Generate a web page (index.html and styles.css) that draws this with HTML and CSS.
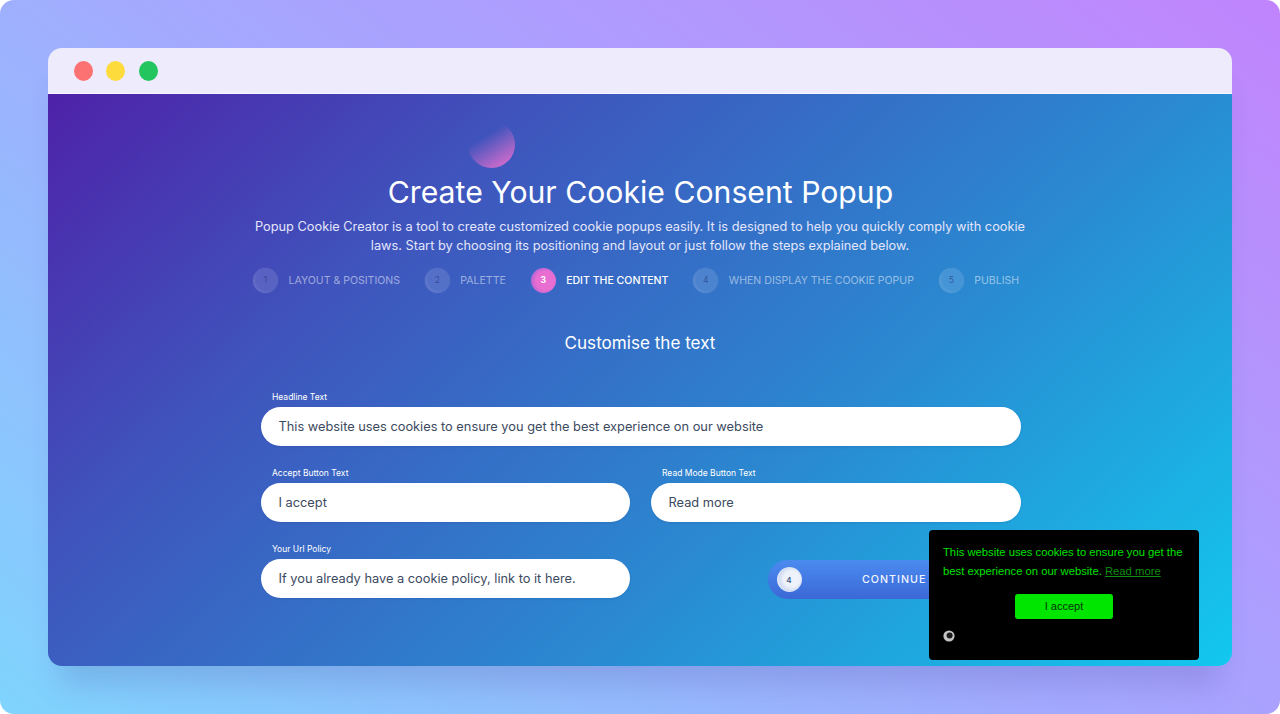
FILE: index.html
```html
<!DOCTYPE html>
<html lang="en">
<head>
<meta charset="utf-8">
<title>Create Your Cookie Consent Popup</title>
<link rel="stylesheet" href="styles.css">
</head>
<body>
<div class="stage">
  <div class="window">
    <div class="titlebar">
      <span class="dot dot-red"></span>
      <span class="dot dot-yellow"></span>
      <span class="dot dot-green"></span>
    </div>
    <main class="content">
      <div class="orb-row"><span class="orb"></span></div>
      <h1 class="title">Create Your Cookie Consent Popup</h1>
      <p class="intro">Popup Cookie Creator is a tool to create customized cookie popups easily. It is designed to help you quickly comply with cookie laws. Start by choosing its positioning and layout or just follow the steps explained below.</p>
      <ol class="steps">
        <li class="step"><span class="step-num">1</span><span class="step-label">LAYOUT &amp; POSITIONS</span></li>
        <li class="step"><span class="step-num">2</span><span class="step-label">PALETTE</span></li>
        <li class="step step-active"><span class="step-num">3</span><span class="step-label">EDIT THE CONTENT</span></li>
        <li class="step"><span class="step-num">4</span><span class="step-label">WHEN DISPLAY THE COOKIE POPUP</span></li>
        <li class="step"><span class="step-num">5</span><span class="step-label">PUBLISH</span></li>
      </ol>
      <h2 class="subtitle">Customise the text</h2>
      <form class="form">
        <div class="field field-wide">
          <label class="field-label">Headline Text</label>
          <div class="input">This website uses cookies to ensure you get the best experience on our website</div>
        </div>
        <div class="field">
          <label class="field-label">Accept Button Text</label>
          <div class="input">I accept</div>
        </div>
        <div class="field">
          <label class="field-label">Read Mode Button Text</label>
          <div class="input">Read more</div>
        </div>
        <div class="field">
          <label class="field-label">Your Url Policy</label>
          <div class="input">If you already have a cookie policy, link to it here.</div>
        </div>
        <div class="field field-action">
          <div class="continue"><span class="continue-num">4</span><span class="continue-text">CONTINUE</span></div>
        </div>
      </form>
    </main>
    <aside class="cookie">
      <p class="cookie-text">This website uses cookies to ensure you get the best experience on our website. <a class="cookie-link">Read more</a></p>
      <div class="cookie-actions"><span class="cookie-btn">I accept</span></div>
      <svg class="cookie-logo" viewBox="0 0 12 12" width="12" height="12"><circle cx="6" cy="6" r="5.6" fill="#c4c4c4"/><circle cx="6.6" cy="5.5" r="3" fill="#1c1c1c"/></svg>
    </aside>
  </div>
</div>
</body>
</html>
```
FILE: styles.css
```css
* { box-sizing: border-box; }
html, body { margin: 0; padding: 0; background: #fff; }
body { font-family: Inter, "Liberation Sans", sans-serif; width: 1280px; height: 714px; overflow: hidden; }
.stage {
  width: 1280px; height: 714px; padding: 48px; border-radius: 14px;
  background: linear-gradient(38deg, #7fd4fd 0%, #a5a8fe 50%, #c084fc 100%);
}
.window {
  position: relative; width: 1184px; height: 618px; border-radius: 14px;
  box-shadow: 0 30px 30px -12px rgba(60, 70, 150, .2);
}
.titlebar {
  height: 46px; display: flex; align-items: center; gap: 13.3px; padding-left: 26px;
  background: #eeebfc; border-radius: 14px 14px 0 0; border-bottom: 1px solid #f7f6fe;
}
.dot { width: 19px; height: 20px; border-radius: 50%; }
.dot-red { background: #fc7272; }
.dot-yellow { background: #fedb3d; }
.dot-green { background: #22c55e; }
.content {
  height: 572px; border-radius: 0 0 14px 14px; padding-top: 27px; color: #fff;
  background: linear-gradient(137deg, #4e22a8 0%, #3f55bd 28%, #2b87d0 62%, #12c8ee 100%);
}
.orb-row { height: 47px; padding-left: 420px; }
.orb {
  display: block; width: 47px; height: 47px; border-radius: 50%;
  background: linear-gradient(148deg, rgba(236,110,200,0) 34%, rgba(226,110,205,.95) 92%);
}
.title { margin: 4px 0 0; padding-left: 1px; font-size: 30.2px; line-height: 40px; font-weight: 400; text-align: center; }
.intro {
  width: 790px; margin: 5px auto 0; font-size: 12.78px; line-height: 19px;
  text-align: center; color: #e4e6fb;
}
.steps {
  list-style: none; margin: 12px 0 0; padding: 0 0 0 205px; display: flex; gap: 24.8px; height: 26px;
}
.step { display: flex; align-items: center; gap: 10.5px; }
.step-num {
  width: 25px; height: 25px; border-radius: 50%; display: flex; align-items: center; justify-content: center;
  font-size: 8.5px; color: rgba(30,40,110,.55);
  background: radial-gradient(circle at 58% 45%, rgba(255,255,255,.12) 55%, rgba(255,255,255,.24) 85%, rgba(255,255,255,.08) 100%);
  box-shadow: 0 0 2px rgba(255,255,255,.1);
}
.step-label { font-size: 10.55px; font-weight: 400; color: rgba(255,255,255,.5); }
.step-active .step-num {
  background: radial-gradient(circle at 58% 52%, #e96ed2 48%, #b263d4 78%, #8a5fd0 100%); color: #fff; font-weight: 700;
}
.step-active .step-label { color: #fff; font-weight: 500; }
.subtitle { margin: 38px 0 0; font-size: 17.1px; line-height: 24px; font-weight: 400; text-align: center; }
.form {
  width: 760px; margin: 37px 0 0 213px; display: grid; grid-template-columns: 369px 370px; column-gap: 21px; row-gap: 22px;
}
.field-wide { grid-column: 1 / 3; }
.field-label { display: block; margin-left: 11px; font-size: 8.5px; line-height: 11px; height: 15px; font-weight: 400; color: #fff; }
.input {
  height: 38.5px; border-radius: 20px; background: #fff; padding: 0 17.5px; display: flex; align-items: center;
  font-size: 12.8px; color: #3b4a60; box-shadow: 0 1px 2px rgba(30,50,120,.15);
}
.form .field { height: 54px; }
.field-action { padding: 16px 0 0 116.5px; }
.continue {
  width: 250px; height: 39px; border-radius: 20px; display: flex; align-items: center;
  background: linear-gradient(180deg, #4b8bf0 0%, #3b68d6 100%);
}
.continue-num {
  margin-left: 9px; width: 25px; height: 25px; border-radius: 50%; display: flex; align-items: center; justify-content: center;
  font-size: 8px; font-weight: 600; color: #44608f;
  background: radial-gradient(circle at 58% 48%, #eef2fb 40%, #d2dcf3 62%, #f4f7fe 85%, #a9bdea 100%);
}
.continue-text { margin-left: 60.5px; font-size: 10.7px; font-weight: 500; letter-spacing: 1px; color: #f0f5ff; }
.cookie {
  position: absolute; left: 881px; top: 482px; width: 270px; height: 130px; padding: 13px 14px 0;
  background: #000; border-radius: 4px; font-family: "Liberation Sans", Arial, sans-serif;
}
.cookie-text { margin: 0; font-size: 11.25px; line-height: 19.3px; color: #00e000; }
.cookie-link { color: #0f8f0f; text-decoration: underline; }
.cookie-actions { display: flex; justify-content: center; margin-top: 12px; }
.cookie-btn {
  width: 98px; height: 25px; border-radius: 3px; background: #00e600; color: #043304;
  display: flex; align-items: center; justify-content: center; font-size: 11px;
}
.cookie-logo { position: absolute; left: 14px; top: 100px; }
```
